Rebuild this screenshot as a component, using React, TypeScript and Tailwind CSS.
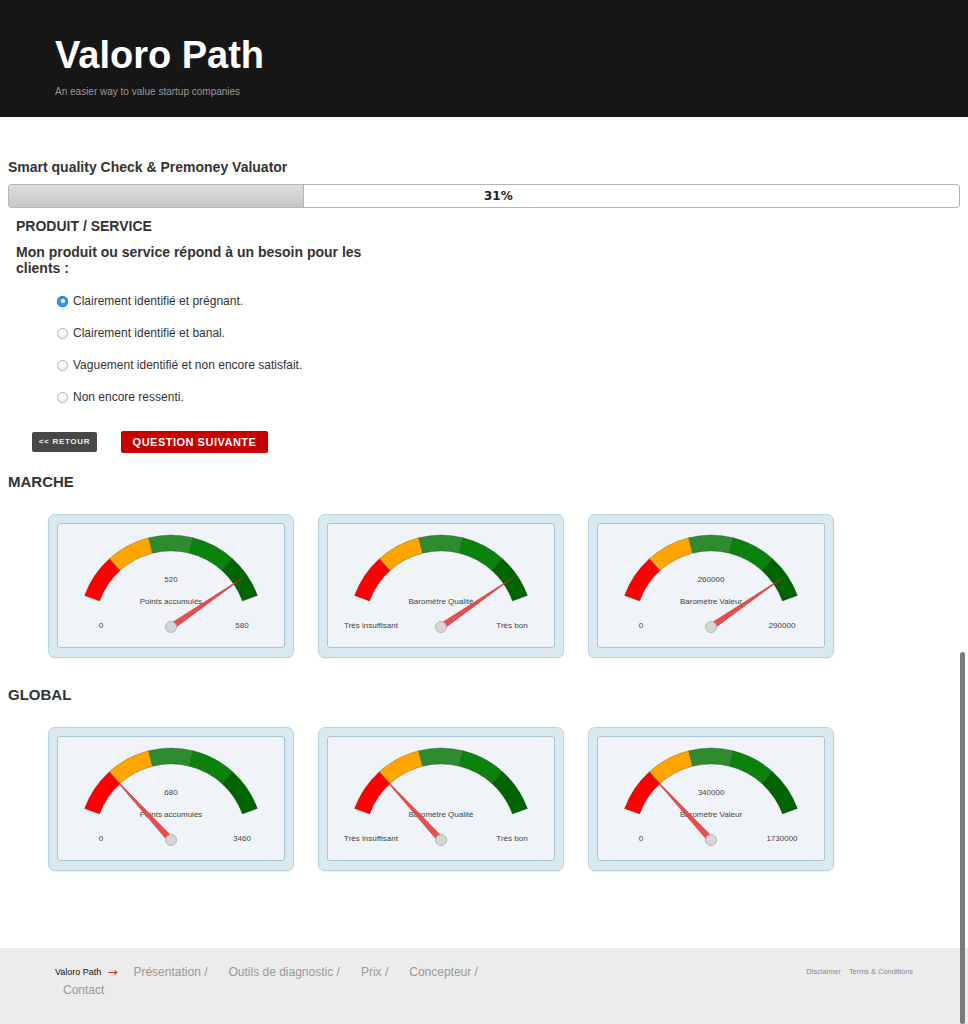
import React from "react";

interface GaugeProps {
  frac: number;
  value?: string;
  label: string;
  minLabel: string;
  maxLabel: string;
}

const CX = 113;
const CY = 103;
const R_OUT = 92;
const R_IN = 76;
const segColors = ["#ff0000", "#ffa500", "#2e8b2e", "#0b820b", "#006400"];

const pt = (a: number, r: number) => {
  const rad = (a * Math.PI) / 180;
  return [CX + r * Math.cos(rad), CY - r * Math.sin(rad)];
};

const arcPath = (a1: number, a2: number) => {
  const [x1, y1] = pt(a1, R_OUT);
  const [x2, y2] = pt(a2, R_OUT);
  const [x3, y3] = pt(a2, R_IN);
  const [x4, y4] = pt(a1, R_IN);
  return `M${x1} ${y1} A${R_OUT} ${R_OUT} 0 0 1 ${x2} ${y2} L${x3} ${y3} A${R_IN} ${R_IN} 0 0 0 ${x4} ${y4} Z`;
};

const Gauge = ({ frac, value, label, minLabel, maxLabel }: GaugeProps) => {
  const theta = ((160 - frac * 140) * Math.PI) / 180;
  const ux = Math.cos(theta);
  const uy = -Math.sin(theta);
  const nx = Math.sin(theta);
  const ny = Math.cos(theta);
  const tip = [CX + ux * 88, CY + uy * 88];
  const needle = `${CX + nx * 3},${CY + ny * 3} ${tip[0]},${tip[1]} ${CX - nx * 3},${CY - ny * 3}`;

  return (
    <div className="w-[246px] h-[144px] p-[8px] rounded-[7px] border border-[#bcd3df] bg-[#dae9f1] shadow-[0_1px_2px_rgba(0,0,0,0.08)]">
      <div className="h-[125px] rounded-[3px] border border-[#a8c4d4] bg-[#f0f4f8]">
        <svg width="226" height="123" viewBox="0 0 226 123" className="block">
          {segColors.map((c, i) => (
            <path
              key={c}
              d={arcPath(160 - i * 28, 160 - (i + 1) * 28)}
              fill={c}
              stroke="rgba(0,0,0,0.35)"
              strokeWidth="0.6"
            />
          ))}
          <g fontFamily="'Liberation Sans', Arial, sans-serif" fontSize="8" fill="#444" textAnchor="middle">
            {value && (
              <text x={CX} y="57.5">
                {value}
              </text>
            )}
            <text x={CX} y="79.5">
              {label}
            </text>
            <text x="43" y="104">
              {minLabel}
            </text>
            <text x="184" y="104">
              {maxLabel}
            </text>
          </g>
          <polygon points={needle} fill="#ee4c4c" stroke="#b03030" strokeWidth="0.6" />
          <circle cx={CX} cy={CY} r="5.5" fill="#d6d6d6" stroke="#a8a8a8" strokeWidth="0.8" />
        </svg>
      </div>
    </div>
  );
};

const options = [
  "Clairement identifié et prégnant.",
  "Clairement identifié et banal.",
  "Vaguement identifié et non encore satisfait.",
  "Non encore ressenti.",
];

const marche: GaugeProps[] = [
  { frac: 520 / 580, value: "520", label: "Points accumulés", minLabel: "0", maxLabel: "580" },
  { frac: 520 / 580, label: "Baromètre Qualité", minLabel: "Très insuffisant", maxLabel: "Très bon" },
  { frac: 260000 / 290000, value: "260000", label: "Baromètre Valeur", minLabel: "0", maxLabel: "290000" },
];

const global: GaugeProps[] = [
  { frac: 680 / 3460, value: "680", label: "Points accumulés", minLabel: "0", maxLabel: "3460" },
  { frac: 680 / 3460, label: "Baromètre Qualité", minLabel: "Très insuffisant", maxLabel: "Très bon" },
  { frac: 340000 / 1730000, value: "340000", label: "Baromètre Valeur", minLabel: "0", maxLabel: "1730000" },
];

const navLinks = ["Présentation /", "Outils de diagnostic /", "Prix /", "Concepteur /", "Contact"];

const App = () => {
  return (
    <div className="w-[968px] bg-white font-['Liberation_Sans',Arial,sans-serif] text-[#333]">
      <header className="h-[117px] bg-[#161616] pl-[55px]">
        <div className="pt-[36px] text-[38px] font-bold leading-none text-white">Valoro Path</div>
        <div className="mt-[12px] text-[10px] leading-[12px] text-[#999]">An easier way to value startup companies</div>
      </header>

      <main className="h-[831px] px-2 pt-[42px]">
        <h1 className="text-[14px] font-bold leading-[16px]">Smart quality Check &amp; Premoney Valuator</h1>

        <div className="relative mt-[9px] h-[24px] overflow-hidden rounded-[3px] border border-[#b4b4b4] bg-white">
          <div className="h-full w-[31%] border-r border-[#b4b4b4] bg-gradient-to-b from-[#dedede] to-[#c7c7c7]" />
          <span className="absolute left-1/2 top-0 font-['DejaVu_Sans',Verdana,sans-serif] text-[12px] font-bold leading-[22px] text-[#222]">
            31%
          </span>
        </div>

        <div className="px-2">
          <h2 className="mt-[10px] text-[14px] font-bold leading-[16px]">PRODUIT / SERVICE</h2>
          <p className="mt-[10px] w-[375px] text-[14px] font-bold leading-[16px]">
            Mon produit ou service répond à un besoin pour les clients :
          </p>

          <ul className="mt-[9px] pl-[41px]">
            {options.map((o, i) => (
              <li key={o} className="flex h-[32px] items-center gap-[5px] text-[12px] text-[#333]">
                {i === 0 ? (
                  <span className="flex h-[11px] w-[11px] items-center justify-center rounded-full bg-[#3b93f3] shadow-[inset_0_0_0_1px_#2a7fdc]">
                    <span className="h-[4px] w-[4px] rounded-full bg-white" />
                  </span>
                ) : (
                  <span className="h-[11px] w-[11px] rounded-full border border-[#b0b0b0] bg-gradient-to-b from-white to-[#f0f0f0]" />
                )}
                {o}
              </li>
            ))}
          </ul>

          <div className="mt-[18px] flex h-[22px] items-center gap-[24px] pl-[16px]">
            <button className="h-[20px] w-[65px] rounded-[2px] bg-[#474747] text-[8px] font-bold tracking-[0.7px] text-[#eee]">
              &lt;&lt; RETOUR
            </button>
            <button className="h-[22px] w-[147px] rounded-[2px] bg-[#c40000] text-[11px] font-bold tracking-[0.5px] text-white">
              QUESTION SUIVANTE
            </button>
          </div>
        </div>

        <h2 className="mt-[20px] text-[15px] font-bold leading-[18px]">MARCHE</h2>
        <div className="mt-[23px] flex gap-[24px] pl-[40px]">
          {marche.map((g) => (
            <Gauge key={g.label} {...g} />
          ))}
        </div>

        <h2 className="mt-[28px] text-[15px] font-bold leading-[18px]">GLOBAL</h2>
        <div className="mt-[23px] flex gap-[24px] pl-[40px]">
          {global.map((g) => (
            <Gauge key={g.label} {...g} />
          ))}
        </div>
      </main>

      <footer className="flex h-[76px] justify-between bg-[#ececec] px-[55px] pt-[15px]">
        <div className="flex w-[470px] flex-wrap content-start text-[12px] leading-[18px] text-[#999]">
          <span className="mr-[8px] flex items-center text-[9px] text-[#111]">
            Valoro Path
            <span className="ml-[6px] font-['DejaVu_Sans',sans-serif] text-[12px] text-[#c62828]">→</span>
          </span>
          {navLinks.map((l) => (
            <span key={l} className="mr-[13px] pl-[8px]">
              {l}
            </span>
          ))}
        </div>
        <div className="flex gap-[8px] text-[7.4px] leading-[18px] text-[#888]">
          <span>Disclaimer</span>
          <span>Terms &amp; Conditions</span>
        </div>
      </footer>

      <div className="fixed right-[3px] top-[652px] h-[372px] w-[5px] rounded-full bg-[#7a7a7a]" />
    </div>
  );
};

export default App;
